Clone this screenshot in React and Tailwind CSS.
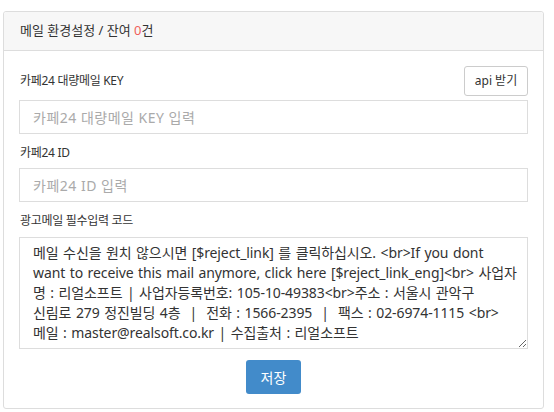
import React from 'react';

const FONT = { fontFamily: '"Noto Sans", "Noto Sans CJK KR", sans-serif' };

const notice =
  '메일 수신을 원치 않으시면 [$reject_link] 를 클릭하십시오. <br>If you dont\n' +
  'want to receive this mail anymore, click here [$reject_link_eng]<br> 사업자\n' +
  '명 : 리얼소프트 | 사업자등록번호: 105-10-49383<br>주소 : 서울시 관악구\n' +
  '신림로 279 정진빌딩 4층  |  전화 : 1566-2395  |  팩스 : 02-6974-1115 <br>\n' +
  '메일 : master@realsoft.co.kr | 수집출처 : 리얼소프트';

export default function App() {
  return (
    <div className="w-[554px] h-[412px] bg-white pt-[11px] pl-[3px]" style={FONT}>
      <div className="w-[541px] h-[398px] border border-[#dddddd] rounded-[3px] flex flex-col">
        {/* header */}
        <div className="h-[39px] bg-[#f7f7f7] border-b border-[#dddddd] rounded-t-[3px] flex items-center pl-[16px] text-[13px] text-[#333] whitespace-pre">
          메일 환경설정 / 잔여{' '}<span className="text-[#f0605a]">0</span>건
        </div>

        <div className="flex flex-col px-[15px] pt-[15px]">
          <div className="flex items-center justify-between h-[30px] mb-[4px]">
            <span className="text-[12px] text-[#333] pl-[1px] tracking-[-0.3px]">카페24 대량메일 KEY</span>
            <button className="h-[30px] w-[64px] border border-[#cccccc] rounded-[3px] bg-white text-[12px] text-[#333]">
              api 받기
            </button>
          </div>
          <input
            className="h-[34px] border border-[#dddddd] px-[13px] text-[14px] tracking-[0.5px] outline-none placeholder:text-[#aaaaaa]"
            placeholder="카페24 대량메일 KEY 입력"
          />

          <label className="mt-[10px] mb-[6px] h-[18px] flex items-center text-[12px] text-[#333] pl-[1px] tracking-[-0.3px]">
            카페24 ID
          </label>
          <input
            className="h-[34px] border border-[#dddddd] px-[13px] text-[14px] tracking-[0.5px] outline-none placeholder:text-[#aaaaaa]"
            placeholder="카페24 ID 입력"
          />

          <label className="mt-[10px] mb-[7px] h-[18px] flex items-center text-[12px] text-[#333] pl-[1px] tracking-[-0.3px]">
            광고메일 필수입력 코드
          </label>
          <textarea
            className="h-[112px] border border-[#dddddd] pl-[13px] pr-[2px] py-[5px] text-[14px] tracking-[-0.1px] [word-spacing:1px] leading-[20px] text-[#333] outline-none whitespace-pre-wrap overflow-hidden resize-y"
            defaultValue={notice}
          />

          <div className="flex justify-center mt-[11px]">
            <button className="h-[34px] w-[55px] rounded-[3px] bg-[#428bca] text-white text-[14px]">
              저장
            </button>
          </div>
        </div>
      </div>
    </div>
  );
}
